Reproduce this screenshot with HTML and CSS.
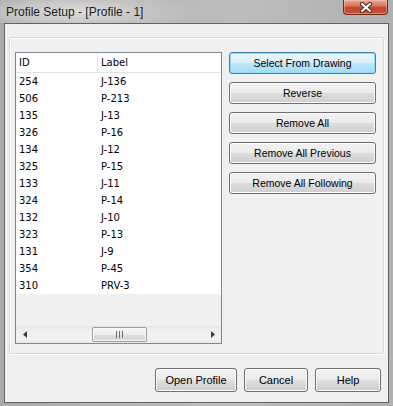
FILE: index.html
```html
<!DOCTYPE html>
<html lang="en">
<head>
  <meta charset="UTF-8">
  <title>Profile Setup</title>
  <link rel="stylesheet" href="styles.css">
</head>
<body>
  <div class="window">
    <div class="titlebar">
      <span class="title">Profile Setup - [Profile - 1]</span>
      <div class="close-btn">
        <svg width="14" height="11" viewBox="0 0 14 11">
          <path d="M3 2 L11 9 M11 2 L3 9" stroke="#4a2a22" stroke-width="4.2" stroke-linecap="round" fill="none"/>
          <path d="M3 2 L11 9 M11 2 L3 9" stroke="#ffffff" stroke-width="2.2" stroke-linecap="round" fill="none"/>
        </svg>
      </div>
    </div>

    <div class="client">
      <div class="group">
        <div class="grid">
          <div class="grid-head">
            <div class="cell col-id">ID</div>
            <div class="cell col-label">Label</div>
          </div>
          <div class="grid-body">
            <div class="row"><div class="cell col-id">254</div><div class="cell col-label">J-136</div></div>
            <div class="row"><div class="cell col-id">506</div><div class="cell col-label">P-213</div></div>
            <div class="row"><div class="cell col-id">135</div><div class="cell col-label">J-13</div></div>
            <div class="row"><div class="cell col-id">326</div><div class="cell col-label">P-16</div></div>
            <div class="row"><div class="cell col-id">134</div><div class="cell col-label">J-12</div></div>
            <div class="row"><div class="cell col-id">325</div><div class="cell col-label">P-15</div></div>
            <div class="row"><div class="cell col-id">133</div><div class="cell col-label">J-11</div></div>
            <div class="row"><div class="cell col-id">324</div><div class="cell col-label">P-14</div></div>
            <div class="row"><div class="cell col-id">132</div><div class="cell col-label">J-10</div></div>
            <div class="row"><div class="cell col-id">323</div><div class="cell col-label">P-13</div></div>
            <div class="row"><div class="cell col-id">131</div><div class="cell col-label">J-9</div></div>
            <div class="row"><div class="cell col-id">354</div><div class="cell col-label">P-45</div></div>
            <div class="row"><div class="cell col-id">310</div><div class="cell col-label">PRV-3</div></div>
          </div>
          <div class="hscroll">
            <div class="sb-arrow">
              <svg width="4" height="7" viewBox="0 0 4 7"><path d="M4 0 L0 3.5 L4 7 Z" fill="#3c3c3c"/></svg>
            </div>
            <div class="sb-track">
              <div class="sb-thumb">
                <svg width="7" height="7" viewBox="0 0 7 7">
                  <path d="M0.5 0 V7 M3.5 0 V7 M6.5 0 V7" stroke="#6d6d6d" stroke-width="1" fill="none"/>
                </svg>
              </div>
            </div>
            <div class="sb-arrow">
              <svg width="4" height="7" viewBox="0 0 4 7"><path d="M0 0 L4 3.5 L0 7 Z" fill="#3c3c3c"/></svg>
            </div>
          </div>
        </div>

        <div class="side-buttons">
          <button class="btn default">Select From Drawing</button>
          <button class="btn">Reverse</button>
          <button class="btn">Remove All</button>
          <button class="btn">Remove All Previous</button>
          <button class="btn">Remove All Following</button>
        </div>
      </div>

      <div class="footer">
        <button class="btn big open">Open Profile</button>
        <button class="btn big cancel">Cancel</button>
        <button class="btn big help">Help</button>
      </div>
    </div>
  </div>
</body>
</html>
```

FILE: styles.css
```css
body {
  margin: 0;
  background: #8c8c8c;
}

.window {
  width: 393px;
  height: 406px;
  box-sizing: border-box;
  padding: 0 4px 3px 4px;
  display: flex;
  flex-direction: column;
  background: linear-gradient(90deg, #a9a9a9 0%, #b4b4b4 20%, #bdbdbd 60%, #b0b0b0 100%);
}

.titlebar {
  height: 23px;
  display: flex;
  justify-content: space-between;
  align-items: flex-start;
  margin: 0 1px 0 -4px;
  background: radial-gradient(ellipse 120px 20px at 80px 12px, #dcdcdc 0%, #c4c4c4 60%, rgba(196, 196, 196, 0) 100%);
}

.title {
  font-family: "Liberation Sans", Arial, sans-serif;
  font-size: 12px;
  color: #1c1c1c;
  padding: 5px 0 0 6px;
}

.close-btn {
  width: 45px;
  height: 15px;
  box-sizing: border-box;
  border: 1px solid #6b2a1f;
  border-top: none;
  border-radius: 0 0 4px 4px;
  background: linear-gradient(#e9a896 0%, #d87865 40%, #c4452c 55%, #c95236 100%);
  box-shadow: inset 0 0 0 1px rgba(255, 210, 190, 0.45);
  display: flex;
  align-items: center;
  justify-content: center;
}

.client {
  flex: 1;
  border: 1px solid #5f6468;
  background: #f0f0f0;
  display: flex;
  flex-direction: column;
}

.group {
  margin: 13px 4px 0 4px;
  height: 317px;
  box-sizing: border-box;
  border: 1px solid #d5d9dd;
  border-radius: 2px;
  box-shadow: 1px 1px 0 #ffffff, inset 1px 1px 0 #ffffff;
  padding: 14px 7px 0 5px;
  display: flex;
}

.grid {
  width: 207px;
  height: 292px;
  box-sizing: border-box;
  border: 1px solid #828790;
  background: #f0f0f0;
  display: flex;
  flex-direction: column;
  font-family: "DejaVu Sans", Tahoma, sans-serif;
  font-size: 10px;
  color: #000;
}

.grid-head {
  display: flex;
  height: 19px;
  background: #ffffff;
  border-bottom: 1px solid #e2e3e5;
}

.grid-head .col-id {
  border-right: 1px solid #e2e3e5;
}

.grid-body {
  flex: 1;
}

.row {
  display: flex;
  height: 17px;
  background: #ffffff;
}

.cell {
  display: flex;
  align-items: center;
  padding-left: 3px;
  box-sizing: border-box;
}

.col-id {
  width: 82px;
}

.col-label {
  flex: 1;
}

.hscroll {
  height: 17px;
  display: flex;
  background: linear-gradient(#e3e3e3 0%, #efefef 20%, #f2f2f2 80%, #e8e8e8 100%);
}

.sb-arrow {
  width: 17px;
  display: flex;
  align-items: center;
  justify-content: center;
}

.sb-track {
  flex: 1;
  padding: 1px 0 1px 59px;
  display: flex;
}

.sb-thumb {
  width: 55px;
  box-sizing: border-box;
  border: 1px solid #9b9b9b;
  border-radius: 2px;
  background: linear-gradient(#f6f6f6 0%, #ececec 50%, #dedede 51%, #d4d4d4 100%);
  box-shadow: inset 0 0 0 1px #fafafa;
  display: flex;
  align-items: center;
  justify-content: center;
}

.side-buttons {
  display: flex;
  flex-direction: column;
  gap: 8px;
  margin-left: 7px;
  width: 147px;
}

.btn {
  height: 22px;
  box-sizing: border-box;
  border: 1px solid #707070;
  border-radius: 3px;
  background: linear-gradient(#f2f2f2 0%, #ebebeb 50%, #dddddd 51%, #cfcfcf 100%);
  box-shadow: inset 0 0 0 1px #fcfcfc;
  font-family: "Liberation Sans", Arial, sans-serif;
  font-size: 10.5px;
  color: #000;
  padding: 0;
}

.btn.default {
  border-color: #3c7fb1;
  background: linear-gradient(#eaf6fd 0%, #d9f0fc 50%, #bee6fd 51%, #a7d9f5 100%);
  box-shadow: inset 0 0 0 1px #8fdcf8;
}

.footer {
  display: flex;
  justify-content: flex-end;
  gap: 7px;
  margin: 14px 7px 0 0;
}

.btn.big {
  height: 24px;
  font-size: 11px;
}

.btn.open {
  width: 82px;
}

.btn.cancel {
  width: 64px;
}

.btn.help {
  width: 66px;
}
```
